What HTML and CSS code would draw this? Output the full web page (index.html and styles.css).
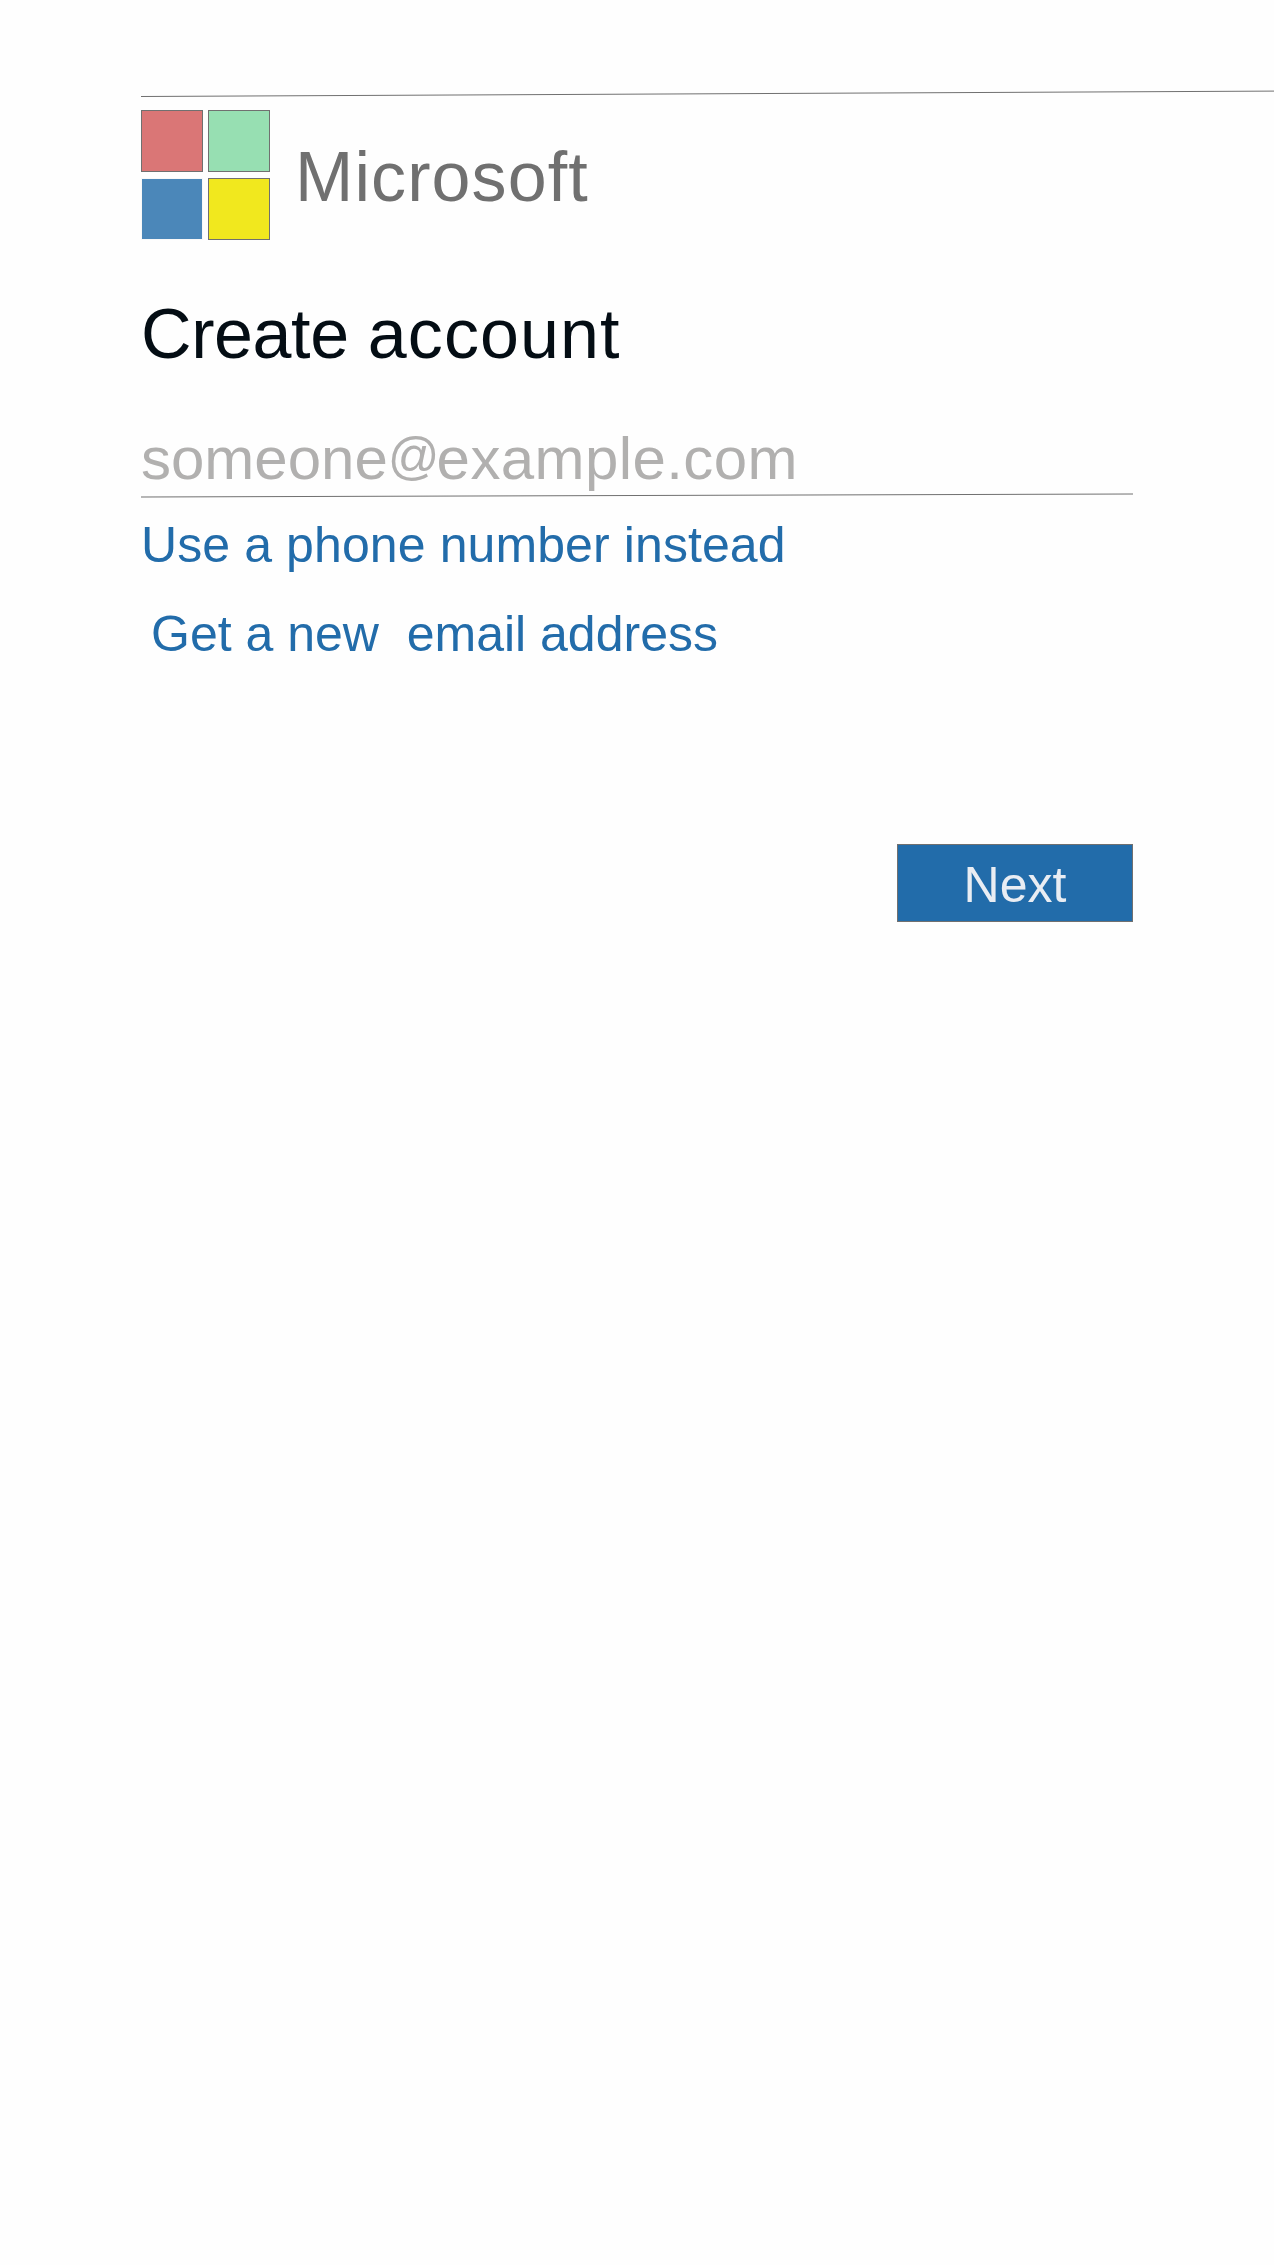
FILE: index.html
```html
<!DOCTYPE html>
<html lang="en">
<head>
<meta charset="utf-8">
<title>Create account</title>
<link rel="stylesheet" href="styles.css">
</head>
<body>
<main class="page">
  <svg class="top-rule" width="1133" height="8" viewBox="0 0 1133 8" aria-hidden="true"><line x1="0" y1="6.5" x2="1133" y2="1.1"/></svg>
  <header class="brand">
    <svg class="logo" width="129" height="130" viewBox="0 0 129 130" aria-hidden="true">
      <rect class="red" x=".5" y=".5" width="61" height="61"/>
      <rect class="green" x="67.5" y=".5" width="61" height="61"/>
      <rect class="blue" x=".5" y="68.5" width="61" height="61"/>
      <rect class="yellow" x="67.5" y="68.5" width="61" height="61"/>
    </svg>
    <span class="brand-name">Microsoft</span>
  </header>
  <form class="form">
    <h1 class="title"><span class="tight">Create </span>account</h1>
    <label class="field">someone<span class="at">@</span><span class="domain">example.com</span></label>
    <svg class="field-rule" width="992" height="6" viewBox="0 0 992 6" aria-hidden="true"><line x1="0" y1="4" x2="992" y2="1"/></svg>
    <a class="link phone">Use a phone number instead</a>
    <a class="link email">Get a new&nbsp; email address</a>
    <button class="next" type="button">Next</button>
  </form>
</main>
</body>
</html>
```
FILE: styles.css
```css
* { box-sizing: border-box; }
body {
  margin: 0;
  background: #fefefe;
  font-family: "Liberation Sans", Arial, sans-serif;
}
.page {
  min-height: 2265px;
  padding: 90px 0 0 141px;
  overflow: hidden;
}
svg { display: block; }
line { stroke: #707070; stroke-width: 1; }
.brand {
  display: flex;
  align-items: center;
  gap: 25px;
  height: 130px;
  margin-top: 12px;
}
.logo rect { stroke: #707070; }
.logo .red { fill: #da7676; }
.logo .green { fill: #97dfb2; }
.logo .blue { fill: #4b87b9; stroke: #f8f8f8; }
.logo .yellow { fill: #f1e81e; }
.brand-name {
  padding-top: 4px;
  font-size: 70px;
  line-height: 70px;
  letter-spacing: 1.1px;
  color: #707070;
}
.form {
  display: flex;
  flex-direction: column;
  width: 992px;
  margin-top: 54px;
}
.title {
  margin: 0;
  font-size: 70px;
  font-weight: 400;
  line-height: 80px;
  letter-spacing: 1.1px;
  color: #040d14;
}
.title .tight { letter-spacing: -.4px; }
.field {
  margin-top: 50px;
  font-size: 60px;
  line-height: 70px;
  color: #b1b0af;
}
.at {
  font-size: 51px;
  line-height: 0;
  letter-spacing: -3px;
  vertical-align: 5px;
}
.domain { letter-spacing: .4px; }
.field-rule { margin-top: -1px; }
.link {
  font-size: 50px;
  line-height: 60px;
  letter-spacing: .1px;
  color: #226caa;
  white-space: nowrap;
}
.phone { margin-top: 16px; }
.email {
  margin: 29px 0 0 10px;
  letter-spacing: 0;
}
.next {
  align-self: flex-end;
  width: 236px;
  height: 78px;
  margin-top: 180px;
  padding: 3px 0 0;
  border: 1px solid #707070;
  background: #226caa;
  color: #e9edf3;
  font: 50px/60px "Liberation Sans", Arial, sans-serif;
}
```
